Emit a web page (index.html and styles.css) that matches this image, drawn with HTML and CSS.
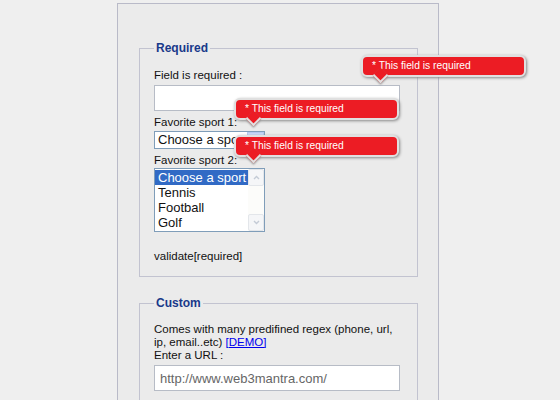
FILE: index.html
```html
<!DOCTYPE html>
<html lang="en">
<head>
  <meta charset="UTF-8">
  <title>Validation engine demo</title>
  <link rel="stylesheet" href="styles.css">
</head>
<body>
  <div class="page">
    <fieldset>
      <legend>Required</legend>
      <label for="req" class="first">Field is required :</label>
      <input type="text" id="req" class="text-input">
      <label>Favorite sport 1:</label>
      <div class="dropdown">
        <span class="dropdown-value">Choose a sport</span>
        <span class="dropdown-btn">
          <svg width="9" height="6" viewBox="0 0 9 6"><path d="M1 1l3.5 3.5L8 1" fill="none" stroke="#4d6185" stroke-width="1.6"/></svg>
        </span>
      </div>
      <label>Favorite sport 2:</label>
      <div class="listbox">
        <div class="options">
          <div class="option selected">Choose a sport</div>
          <div class="option">Tennis</div>
          <div class="option">Football</div>
          <div class="option">Golf</div>
        </div>
        <div class="scrollbar">
          <span class="scroll-btn"><svg width="7" height="5" viewBox="0 0 7 5"><path d="M1 4l2.5-2.5L6 4" fill="none" stroke="#c4cbd6" stroke-width="1.4"/></svg></span>
          <span class="scroll-btn"><svg width="7" height="5" viewBox="0 0 7 5"><path d="M1 1l2.5 2.5L6 1" fill="none" stroke="#c4cbd6" stroke-width="1.4"/></svg></span>
        </div>
      </div>
      <p class="note">validate[required]</p>
    </fieldset>

    <fieldset class="custom">
      <legend>Custom</legend>
      <p class="desc">Comes with many predifined regex (phone, url, ip, email..etc) <a href="#">[DEMO]</a><br>Enter a URL :</p>
      <input type="text" class="text-input url" value="http://www.web3mantra.com/">
    </fieldset>
  </div>

  <div class="form-error err-1"><div class="form-error-content">* This field is required</div><div class="form-error-arrow"></div></div>
  <div class="form-error err-2"><div class="form-error-content">* This field is required</div><div class="form-error-arrow"></div></div>
  <div class="form-error err-3"><div class="form-error-content">* This field is required</div><div class="form-error-arrow"></div></div>
</body>
</html>
```

FILE: styles.css
```css
body {
  margin: 0;
  background: #efefef;
  font-family: "Liberation Sans", Arial, sans-serif;
  font-size: 11.5px;
  color: #111;
  overflow: hidden;
}
.page {
  margin: 3px 0 0 117px;
  width: 322px;
  height: 420px;
  border: 1px solid #b9bac8;
  background: #ebebeb;
  padding-top: 37px;
  box-sizing: border-box;
}
fieldset {
  margin: 0 0 0 21px;
  width: 279px;
  box-sizing: border-box;
  border: 1px solid #c2c3d0;
  padding: 4px 17px 13px 14px;
}
fieldset.custom {
  margin-top: 19px;
}
legend {
  padding: 0 2px;
  font-size: 12px;
  font-weight: bold;
  color: #19398a;
}
label {
  display: block;
  margin-top: 5px;
  line-height: 13px;
}
label.first {
  margin-top: 10px;
}
.text-input {
  display: block;
  width: 246px;
  height: 26px;
  box-sizing: border-box;
  margin: 3px 0 0;
  border: 1px solid #b7bcc6;
  background: #fff;
  font-family: "Liberation Sans", Arial, sans-serif;
  font-size: 13px;
  padding: 0 5px;
}
.text-input.url {
  color: #666;
  margin-top: 3px;
}
.dropdown {
  display: flex;
  width: 111px;
  height: 18px;
  box-sizing: border-box;
  margin-top: 2px;
  border: 1px solid #7f9db9;
  background: #fff;
  font-size: 13px;
}
.dropdown-value {
  flex: 1;
  padding-left: 3px;
  line-height: 16px;
  overflow: hidden;
  white-space: nowrap;
}
.dropdown-btn {
  width: 15px;
  display: flex;
  align-items: center;
  justify-content: center;
  background: #c9d8f7;
  border: 1px solid #b6c8ee;
}
.listbox {
  display: flex;
  width: 111px;
  height: 64px;
  box-sizing: border-box;
  margin-top: 1px;
  border: 1px solid #7f9db9;
  background: #fff;
  font-size: 13px;
}
.options {
  flex: 1;
  padding-top: 1px;
}
.option {
  height: 15px;
  line-height: 15px;
  padding-left: 3px;
  white-space: nowrap;
}
.option.selected {
  background: #316ac5;
  color: #fff;
}
.scrollbar {
  width: 16px;
  display: flex;
  flex-direction: column;
  justify-content: space-between;
  background: #fcfcfa;
}
.scroll-btn {
  height: 15px;
  display: flex;
  align-items: center;
  justify-content: center;
  background: #f5f6f8;
  border: 1px solid #e3e6ea;
  border-radius: 2px;
}
.note {
  margin: 18px 0 0;
  line-height: 13px;
}
.desc {
  margin: 9px 0 0;
  line-height: 13px;
}
.desc a {
  color: #0000ee;
}
.form-error {
  position: absolute;
  width: 165px;
}
.form-error-content {
  position: relative;
  z-index: 1;
  background: #ec1c24;
  color: #fff;
  font-size: 10.3px;
  line-height: 18px;
  padding: 0 9px;
  border: 2px solid #e0e0e0;
  border-radius: 6px;
  box-shadow: 1px 1px 3px #888;
}
.form-error-arrow {
  position: absolute;
  z-index: 2;
  left: 14px;
  top: 15px;
  width: 9px;
  height: 9px;
  background: #ec1c24;
  border-right: 2px solid #e0e0e0;
  border-bottom: 2px solid #e0e0e0;
  transform: rotate(45deg);
  box-shadow: 1px 1px 2px #999;
}
.err-1 { left: 361px; top: 55px; }
.err-2 { left: 234px; top: 98px; }
.err-3 { left: 234px; top: 135px; }
```
